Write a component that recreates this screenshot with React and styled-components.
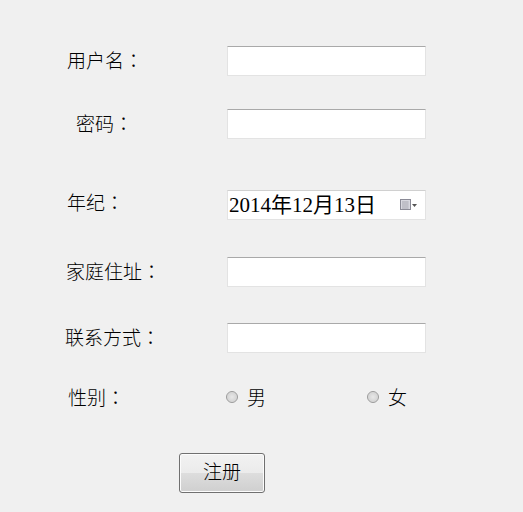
import React from 'react';
import styled, { createGlobalStyle } from 'styled-components';

const GlobalStyle = createGlobalStyle`
  html, body {
    margin: 0;
    padding: 0;
    background: #f0f0f0;
  }
  body {
    font-family: "Liberation Serif", "Noto Sans CJK SC", serif;
    color: #000;
  }
`;

const Form = styled.form`
  width: 523px;
  height: 512px;
  box-sizing: border-box;
  padding: 46px 0 0 65px;
  display: flex;
  flex-direction: column;
`;

const Row = styled.div`
  display: flex;
  align-items: center;
  height: ${(p) => p.$h || 30}px;
  margin-top: ${(p) => p.$gap || 0}px;
`;

const Label = styled.label`
  width: 162px;
  flex: none;
  box-sizing: border-box;
  padding-left: ${(p) => p.$indent || 0}px;
  font-size: 19px;
  font-family: "Noto Sans CJK SC", sans-serif;
  font-weight: 300;
  position: relative;
  top: ${(p) => (p.$shift || 0) - 2}px;
  white-space: nowrap;
`;

/* fullwidth colon drawn centred in its cell, as in the reference */
const Colon = styled.span`
  font-family: "Noto Sans CJK JP", sans-serif;
`;

const TextBox = styled.input`
  width: 199px;
  height: 30px;
  box-sizing: border-box;
  margin: 0;
  padding: 2px 3px;
  background: #fff;
  border: 1px solid #e3e3e3;
  border-top-color: #a9a9a9;
  outline: none;
  font-size: 16px;
`;

const DateBox = styled.div`
  width: 199px;
  height: 30px;
  box-sizing: border-box;
  display: flex;
  align-items: center;
  justify-content: space-between;
  padding: 0 8px 0 1px;
  background: #fff;
  border: 1px solid #e3e3e3;
  border-top-color: #d0d0d0;
  font-size: 21px;
`;

const DateText = styled.span`
  font-family: "Liberation Serif", "Noto Sans CJK SC", serif;
  white-space: nowrap;
  line-height: 1;
`;

const RadioGroup = styled.div`
  display: flex;
  align-items: center;
  position: relative;
  top: -2px;
`;

const RadioOption = styled.label`
  display: flex;
  align-items: center;
  width: ${(p) => p.$w || 141}px;
  font-size: 19px;
  font-family: "Noto Sans CJK SC", sans-serif;
  font-weight: 300;
`;

const RadioDot = styled.span`
  width: 12px;
  height: 12px;
  box-sizing: border-box;
  border-radius: 50%;
  border: 1px solid #9a9a9a;
  background: radial-gradient(circle, #e8e8e8 0%, #d6d6d6 60%, #f4f4f4 100%);
  margin-right: 9px;
  margin-left: -1px;
  margin-top: 2px;
`;

const SubmitBtn = styled.button`
  margin: 40px 0 0 114px;
  width: 86px;
  height: 40px;
  box-sizing: border-box;
  border: 1px solid #707070;
  border-radius: 3px;
  background: linear-gradient(#f2f2f2 0%, #ebebeb 50%, #dddddd 51%, #cfcfcf 100%);
  box-shadow: inset 0 0 0 1px #fcfcfc;
  font-size: 19px;
  font-family: "Noto Sans CJK SC", sans-serif;
  font-weight: 300;
  color: #000;
  padding: 0 0 5px;
  cursor: pointer;
`;

const CalendarIcon = () => (
  <svg width="17" height="12" viewBox="0 0 17 12">
    <rect x="0.5" y="0.5" width="10" height="10" fill="#d8d8e0" stroke="#8a8a96" />
    <path d="M2 3h7M2 5h7M2 7h7M2 9h7M3 2v8M5 2v8M7 2v8" stroke="#a8a8b4" strokeWidth="0.6" />
    <path d="M12 5h5l-2.5 3z" fill="#555" />
  </svg>
);

const App = () => {
  return (
    <>
      <GlobalStyle />
      <Form onSubmit={(e) => e.preventDefault()}>
        <Row>
          <Label $indent={2}>用户名<Colon>：</Colon></Label>
          <TextBox type="text" name="username" />
        </Row>
        <Row $gap={33}>
          <Label $indent={11}>密码<Colon>：</Colon></Label>
          <TextBox type="password" name="password" />
        </Row>
        <Row $gap={51}>
          <Label $indent={2} $shift={-2}>年纪<Colon>：</Colon></Label>
          <DateBox>
            <DateText>2014年12月13日</DateText>
            <CalendarIcon />
          </DateBox>
        </Row>
        <Row $gap={37}>
          <Label $indent={1}>家庭住址<Colon>：</Colon></Label>
          <TextBox type="text" name="address" />
        </Row>
        <Row $gap={36}>
          <Label>联系方式<Colon>：</Colon></Label>
          <TextBox type="text" name="contact" />
        </Row>
        <Row $gap={30}>
          <Label $indent={3}>性别<Colon>：</Colon></Label>
          <RadioGroup>
            <RadioOption $w={141}>
              <RadioDot />男
            </RadioOption>
            <RadioOption $w={60}>
              <RadioDot />女
            </RadioOption>
          </RadioGroup>
        </Row>
        <SubmitBtn type="submit">注册</SubmitBtn>
      </Form>
    </>
  );
};

export default App;
